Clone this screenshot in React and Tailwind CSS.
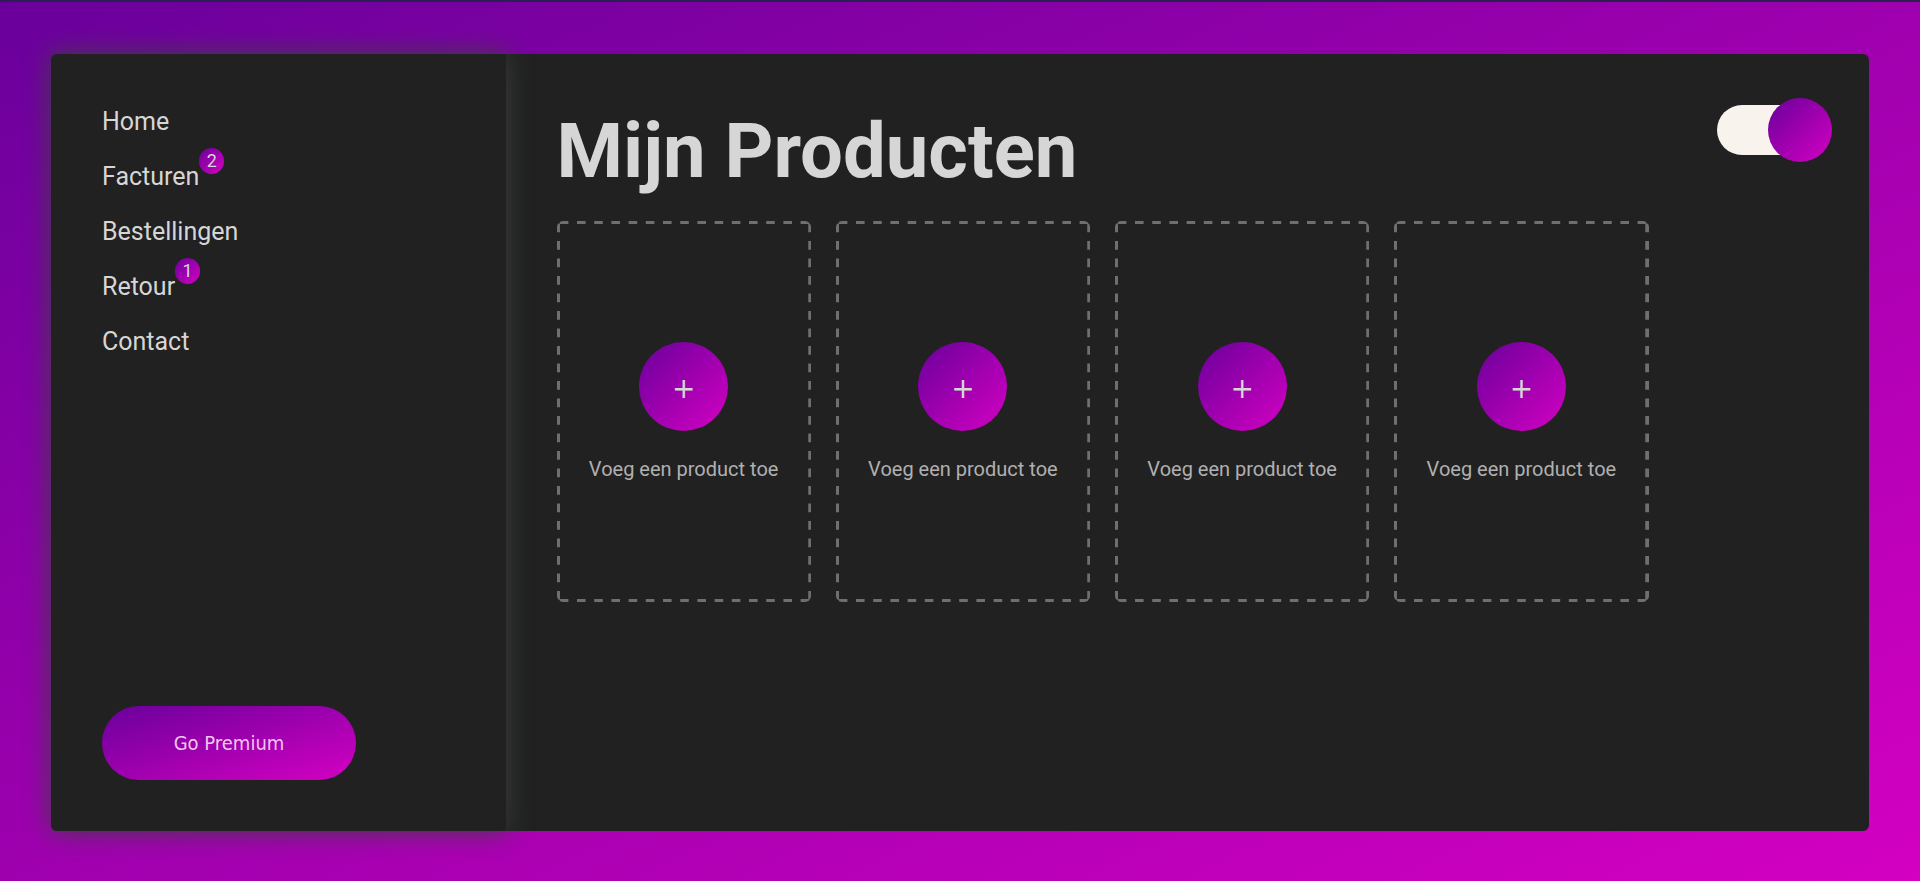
const menu = [
  { label: "Home" },
  { label: "Facturen", count: 2 },
  { label: "Bestellingen" },
  { label: "Retour", count: 1 },
  { label: "Contact" },
];

const slots = [1, 2, 3, 4];

function Sidebar() {
  return (
    <aside className="flex w-1/4 shrink-0 flex-col justify-between rounded-l-md bg-[#212121] px-[51px] pt-[53px] pb-[51px] shadow-[0_0_26px_#3c4040]">
      <nav>
        <ul className="flex flex-col gap-[25px]">
          {menu.map((item) => (
            <li key={item.label} className="flex h-[30px] items-center">
              <a href="#" className="relative text-[25px] leading-[30px]">
                {item.label}
                {item.count && (
                  <span className="absolute -top-[14px] left-full flex h-[26px] w-[25px] items-center justify-center rounded-full bg-[linear-gradient(to_bottom_right,#6a009c,#d400c2)] text-lg leading-none">
                    {item.count}
                  </span>
                )}
              </a>
            </li>
          ))}
        </ul>
      </nav>
      <button
        type="button"
        className="h-[74px] w-[254px] rounded-full bg-[linear-gradient(to_bottom_right,#6a009c,#d400c2)] font-['DejaVu_Sans_Condensed','DejaVu_Sans',sans-serif] text-[20px] text-[#efc6ee]"
      >
        Go Premium
      </button>
    </aside>
  );
}

function DashedOutline() {
  return (
    <svg
      aria-hidden="true"
      className="pointer-events-none absolute inset-0 size-full overflow-hidden rounded-md"
      stroke="#6f6f6f"
      strokeWidth="6"
    >
      <g strokeDasharray="8.6 8.6" strokeDashoffset="-2.8">
        <line x1="0" y1="0" x2="100%" y2="0" />
        <line x1="0" y1="100%" x2="100%" y2="100%" />
      </g>
      <g strokeDasharray="8.7 8.8" strokeDashoffset="-2.6">
        <line x1="0" y1="0" x2="0" y2="100%" />
        <line x1="100%" y1="0" x2="100%" y2="100%" />
      </g>
    </svg>
  );
}

function ProductSlot() {
  return (
    <li className="relative flex h-[381px] flex-col items-center justify-center gap-6 pt-0.5">
      <DashedOutline />
      <button
        type="button"
        aria-label="Voeg een product toe"
        className="flex size-[89px] items-center justify-center rounded-full bg-[linear-gradient(to_bottom_right,#6a009c,#d400c2)] pt-1 font-['DejaVu_Sans',sans-serif] text-[28px] leading-none"
      >
        +
      </button>
      <p className="text-[20px] leading-7 text-[#b0b0b0]">Voeg een product toe</p>
    </li>
  );
}

function Toggle() {
  return (
    <label className="relative block h-[50px] w-[102px] shrink-0 cursor-pointer rounded-full bg-[#f8f3ec]">
      <input type="checkbox" defaultChecked aria-label="Donkere modus" className="peer sr-only" />
      <span className="absolute -top-[7px] -left-[13px] size-16 rounded-full bg-[linear-gradient(to_bottom_right,#6a009c,#d400c2)] peer-checked:-right-[13px] peer-checked:left-auto" />
    </label>
  );
}

export default function App() {
  return (
    <div className="flex min-h-screen border-t-2 border-[#2b1f52] bg-[linear-gradient(to_bottom_right,#6a009c,#d400c2)] px-[51px] pt-[52px] pb-[50px] font-['Roboto',sans-serif] text-[#d6d6d6]">
      <div className="flex flex-1 rounded-md bg-[#212121]">
        <Sidebar />
        <main className="flex flex-1 items-start justify-between py-[51px] pr-[50px] pl-[51px]">
          <section>
            <h1 className="text-[76px] leading-[92px] font-bold">Mijn Producten</h1>
            <ul className="mt-6 grid w-[1092px] grid-cols-4 gap-[25px]">
              {slots.map((slot) => (
                <ProductSlot key={slot} />
              ))}
            </ul>
          </section>
          <Toggle />
        </main>
      </div>
    </div>
  );
}
